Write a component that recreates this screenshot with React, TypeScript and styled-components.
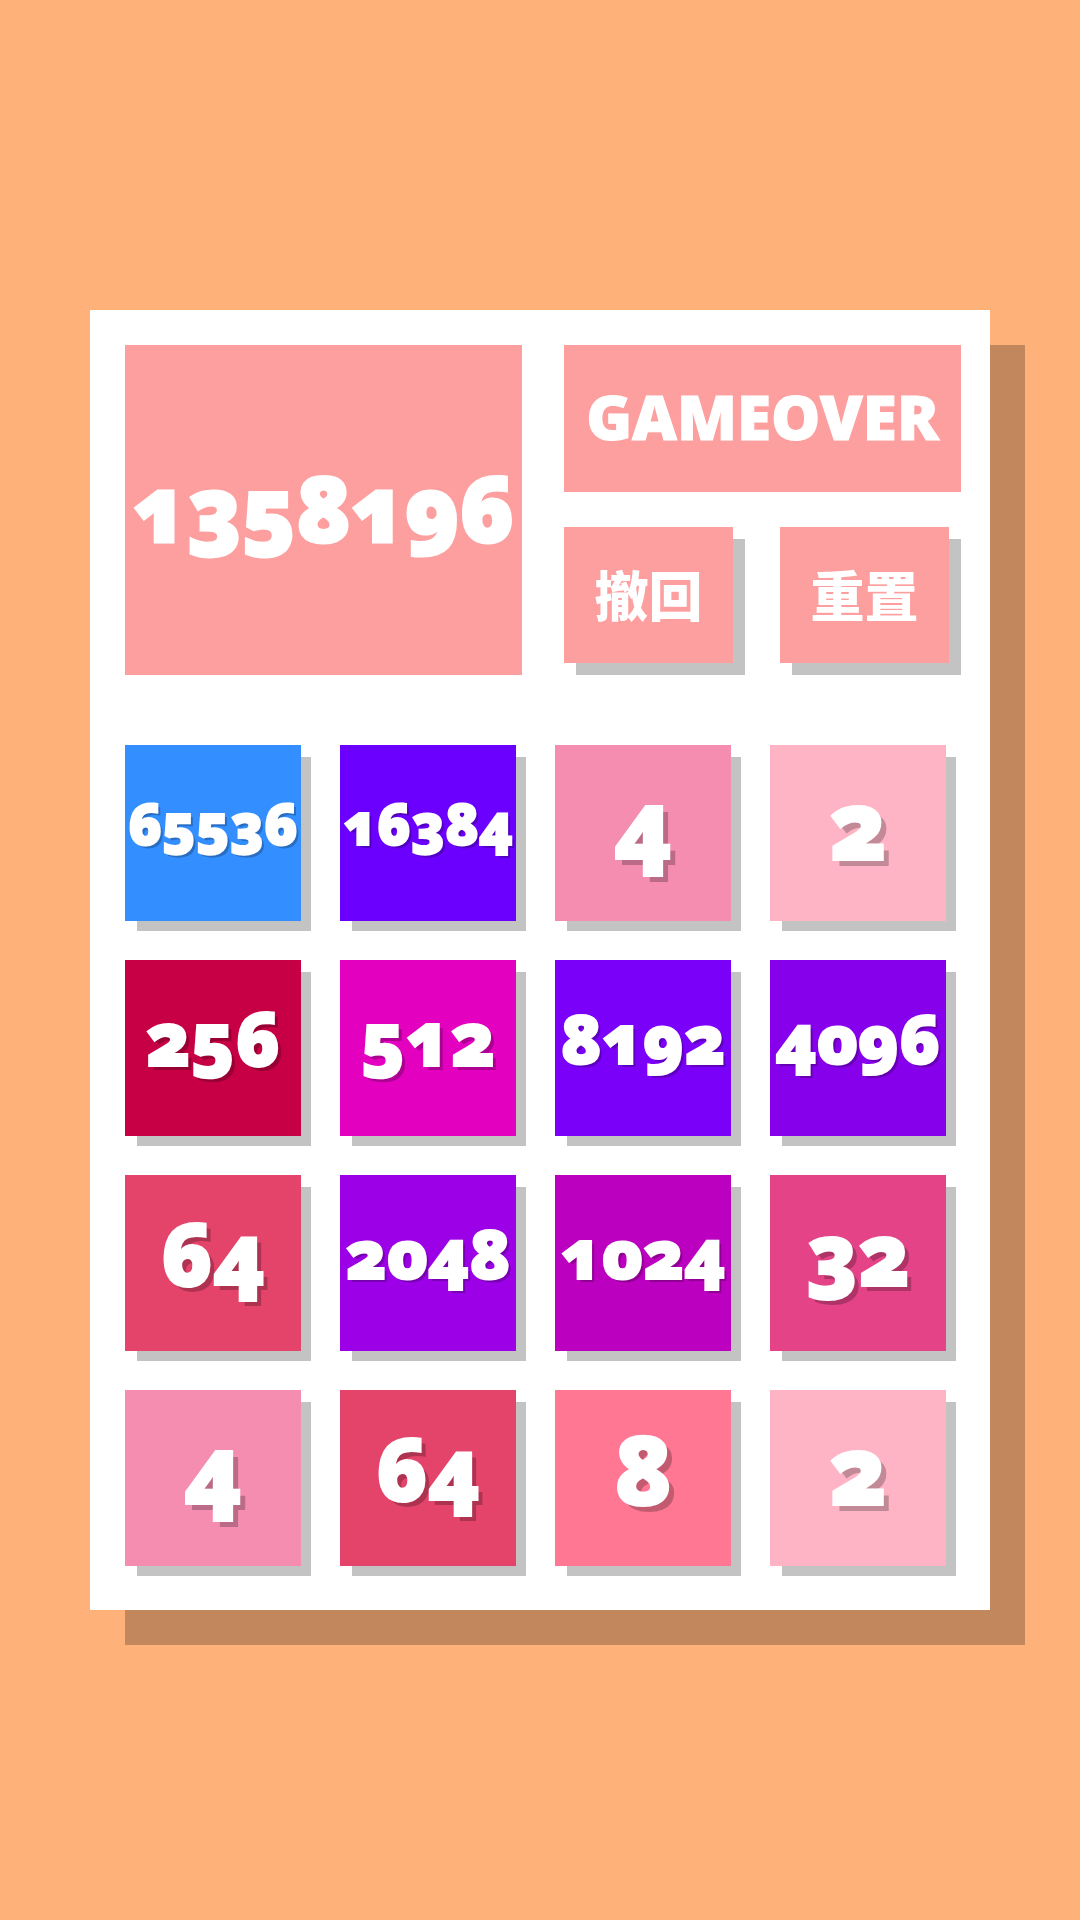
import React from "react";
import styled, { createGlobalStyle } from "styled-components";

const GlobalStyle = createGlobalStyle`
  * { box-sizing: border-box; }
  body {
    margin: 0;
    background: #ffb17a;
    color: #fff;
    font-family: "Noto Sans", "Noto Sans CJK SC", sans-serif;
    font-weight: 900;
    font-variant-numeric: oldstyle-nums;
  }
`;

const Page = styled.main`
  display: flex;
  align-items: center;
  justify-content: center;
  min-height: 100vh;
  padding: 40px 90px;
`;

const Board = styled.section`
  width: 100%;
  max-width: 900px;
  padding: 35px 29px 44px 35px;
  background: #fff;
  box-shadow: 35px 35px 0 rgba(0, 0, 0, 0.235);
`;

const Header = styled.header`
  display: grid;
  grid-template-columns: 1fr 1fr;
  gap: 42px;
  margin-bottom: 70px;
`;

const Panel = styled.div`
  display: flex;
  align-items: center;
  justify-content: center;
  padding-bottom: 6px;
  background: #fd9f9f;
`;

const Score = styled(Panel)`
  font-size: 90px;
  line-height: 120px;
  -webkit-text-stroke: 3px currentColor;
`;

const Side = styled.div`
  display: flex;
  flex-direction: column;
  gap: 35px;
`;

const Status = styled(Panel)`
  height: 147px;
`;

const StatusText = styled.h1`
  margin: 0;
  font-size: 62px;
  font-weight: 900;
  line-height: 80px;
  -webkit-text-stroke: 1px currentColor;
`;

const Actions = styled.div`
  display: grid;
  grid-template-columns: 1fr 1fr;
  gap: 47px;
  padding: 0 12px 12px 0;
`;

const ActionButton = styled.button`
  height: 136px;
  padding: 0 0 2px;
  border: 0;
  background: #fd9f9f;
  box-shadow: 12px 12px 0 rgba(0, 0, 0, 0.235);
  color: #fff;
  font-family: "Noto Sans CJK SC", "Noto Sans", sans-serif;
  font-size: 54px;
  font-weight: 900;
  line-height: 72px;
  cursor: pointer;
`;

const Grid = styled.div`
  display: grid;
  grid-template-columns: repeat(4, 1fr);
  gap: 39px;
  margin-right: 15px;
`;

const textSizes: Record<number, { size: number; shadow: number }> = {
  1: { size: 96, shadow: 6 },
  2: { size: 86, shadow: 5 },
  3: { size: 74, shadow: 4 },
  4: { size: 68, shadow: 3 },
  5: { size: 56, shadow: 3 },
};

const Tile = styled.div<{ $color: string; $digits: number }>`
  display: flex;
  align-items: center;
  justify-content: center;
  aspect-ratio: 1;
  min-width: 0;
  padding-bottom: 20px;
  background: ${(p) => p.$color};
  box-shadow: 11px 11px 0 -1px rgba(0, 0, 0, 0.235);
  font-size: ${(p) => textSizes[p.$digits].size}px;
  line-height: 120px;
  -webkit-text-stroke: 2px currentColor;
  text-shadow: ${(p) => {
    const d = textSizes[p.$digits].shadow;
    return `${d}px ${d}px 0 rgba(0, 0, 0, 0.235)`;
  }};
`;

const tileColors: Record<number, string> = {
  2: "#feb4c4",
  4: "#f58db1",
  8: "#ff7793",
  32: "#e44387",
  64: "#e4436a",
  256: "#c70045",
  512: "#e300bf",
  1024: "#bb00bf",
  2048: "#9c00e7",
  4096: "#8700eb",
  8192: "#7a00fa",
  16384: "#6c00ff",
  65536: "#338fff",
};

const cells = [
  65536, 16384, 4, 2,
  256, 512, 8192, 4096,
  64, 2048, 1024, 32,
  4, 64, 8, 2,
];

export default function App() {
  return (
    <>
      <GlobalStyle />
      <Page>
        <Board>
          <Header>
            <Score>1358196</Score>
            <Side>
              <Status>
                <StatusText>GAMEOVER</StatusText>
              </Status>
              <Actions>
                <ActionButton type="button">撤回</ActionButton>
                <ActionButton type="button">重置</ActionButton>
              </Actions>
            </Side>
          </Header>
          <Grid>
            {cells.map((value, i) => (
              <Tile key={i} $color={tileColors[value]} $digits={String(value).length}>
                {value}
              </Tile>
            ))}
          </Grid>
        </Board>
      </Page>
    </>
  );
}
